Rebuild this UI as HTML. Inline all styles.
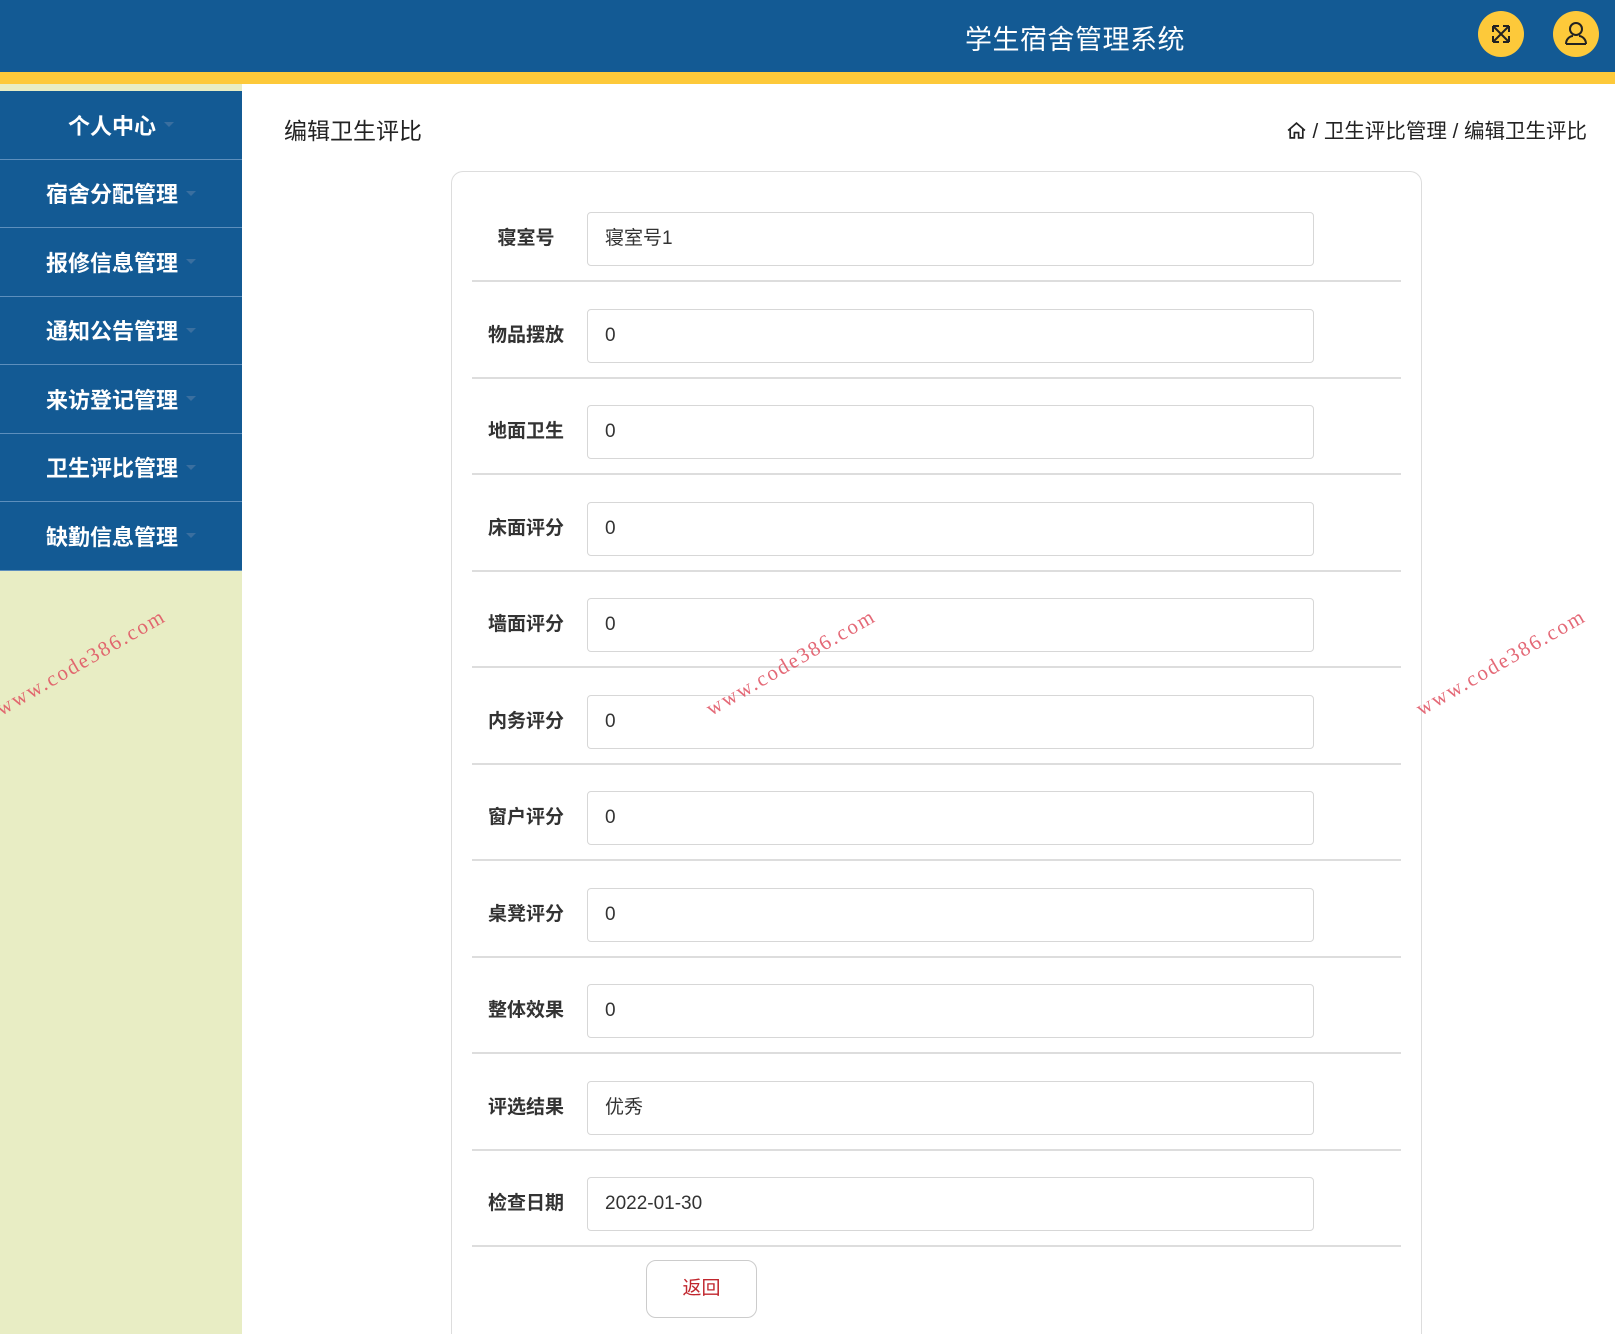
<!DOCTYPE html>
<html><head><meta charset="utf-8"><style>
*{margin:0;padding:0;box-sizing:border-box}
html,body{width:1615px;height:1334px;overflow:hidden}
body{background:#fff;font-family:"Liberation Sans","Noto Sans CJK SC",sans-serif;position:relative}
.hdr{position:absolute;left:0;top:0;width:1615px;height:72px;background:#135a94}
.ybar{position:absolute;left:0;top:72px;width:1615px;height:12px;background:#fdc93a}
.ttl{position:absolute;left:965px;top:18px;font-size:27px;color:#fff;letter-spacing:0.5px}
.circ{position:absolute;top:11px;width:46px;height:46px;border-radius:50%;background:#fdc93a}
.side{position:absolute;left:0;top:84px;width:242px;height:1250px;background:#e8edc4}
.menu{position:absolute;left:0;top:91px;width:242px}
.mi{height:68.5px;background:#135a94;border-bottom:1px solid #5d8fbd;color:#fff;font-size:22px;font-weight:bold;display:flex;align-items:center;justify-content:center}
.mi span.c{display:inline-block;margin-left:8px;border-left:5px solid transparent;border-right:5px solid transparent;border-top:5px solid #3a6f9f}
.ptitle{position:absolute;left:284px;top:112px;font-size:23px;color:#222}
.bc{position:absolute;right:28px;top:114px;font-size:20.5px;color:#222}
.card{position:absolute;left:451px;top:171px;width:971px;height:1163px;border:1px solid #ddd;border-bottom:none;border-radius:12px 12px 0 0}
.row{position:absolute;left:472px;width:929px;height:96.5px}
.lbl{position:absolute;left:0;width:108px;text-align:center;top:0;line-height:54px;font-size:19px;font-weight:bold;color:#333}
.inp{position:absolute;left:115px;top:0;width:727px;height:54px;border:1px solid #d7d7d7;border-radius:4px;font-size:19px;color:#333;line-height:52px;padding-left:17px}
.sep{position:absolute;left:0;top:68px;width:929px;height:2px;background:#ddd}
.btn{position:absolute;left:646px;top:1260px;width:111px;height:58px;border:1px solid #ccc;border-radius:10px;color:#c0262d;font-size:19px;text-align:center;line-height:56px}
.wm{position:absolute;color:#e05060;font-family:"Liberation Serif",serif;font-size:21px;transform:rotate(-30deg);letter-spacing:2px;opacity:.85}
</style></head><body>
<div class="hdr"></div><div class="ybar"></div>
<div class="ttl">学生宿舍管理系统</div>
<div class="circ" style="left:1478px"><svg width="46" height="46" viewBox="0 0 46 46" fill="none" stroke="#222" stroke-width="2"><path d="M15 15L31 31M31 15L15 31M15 15h6M15 15v6M31 15h-6M31 15v6M15 31h6M15 31v-6M31 31h-6M31 31v-6"/></svg></div>
<div class="circ" style="left:1553px"><svg width="46" height="46" viewBox="0 0 46 46" fill="none" stroke="#222" stroke-width="2"><circle cx="23" cy="18" r="6"/><path d="M13 33c0-5 4-8 7-8M33 33c0-5-4-8-7-8M13 33h20"/></svg></div>
<div class="side"></div>
<div class="menu">
<div class="mi">个人中心<span class="c"></span></div>
<div class="mi">宿舍分配管理<span class="c"></span></div>
<div class="mi">报修信息管理<span class="c"></span></div>
<div class="mi">通知公告管理<span class="c"></span></div>
<div class="mi">来访登记管理<span class="c"></span></div>
<div class="mi">卫生评比管理<span class="c"></span></div>
<div class="mi">缺勤信息管理<span class="c"></span></div>
</div>
<div class="ptitle">编辑卫生评比</div>
<div class="bc"><svg width="21" height="21" viewBox="0 0 20 20" fill="none" stroke="#222" stroke-width="1.6" style="vertical-align:-3px"><path d="M2 10L10 3l8 7M4 8v9h4v-5h4v5h4V8"/></svg> / 卫生评比管理 / 编辑卫生评比</div>
<div class="card"></div>
<div class="row" style="top:212px"><div class="lbl">寝室号</div><div class="inp">寝室号1</div><div class="sep"></div></div>
<div class="row" style="top:308.5px"><div class="lbl">物品摆放</div><div class="inp">0</div><div class="sep"></div></div>
<div class="row" style="top:405px"><div class="lbl">地面卫生</div><div class="inp">0</div><div class="sep"></div></div>
<div class="row" style="top:501.5px"><div class="lbl">床面评分</div><div class="inp">0</div><div class="sep"></div></div>
<div class="row" style="top:598px"><div class="lbl">墙面评分</div><div class="inp">0</div><div class="sep"></div></div>
<div class="row" style="top:694.5px"><div class="lbl">内务评分</div><div class="inp">0</div><div class="sep"></div></div>
<div class="row" style="top:791px"><div class="lbl">窗户评分</div><div class="inp">0</div><div class="sep"></div></div>
<div class="row" style="top:887.5px"><div class="lbl">桌凳评分</div><div class="inp">0</div><div class="sep"></div></div>
<div class="row" style="top:984px"><div class="lbl">整体效果</div><div class="inp">0</div><div class="sep"></div></div>
<div class="row" style="top:1080.5px"><div class="lbl">评选结果</div><div class="inp">优秀</div><div class="sep"></div></div>
<div class="row" style="top:1177px"><div class="lbl">检查日期</div><div class="inp">2022-01-30</div><div class="sep"></div></div>
<div class="btn">返回</div>
<div class="wm" style="left:-15px;top:650px">www.code386.com</div>
<div class="wm" style="left:695px;top:650px">www.code386.com</div>
<div class="wm" style="left:1405px;top:650px">www.code386.com</div>
</body></html>
